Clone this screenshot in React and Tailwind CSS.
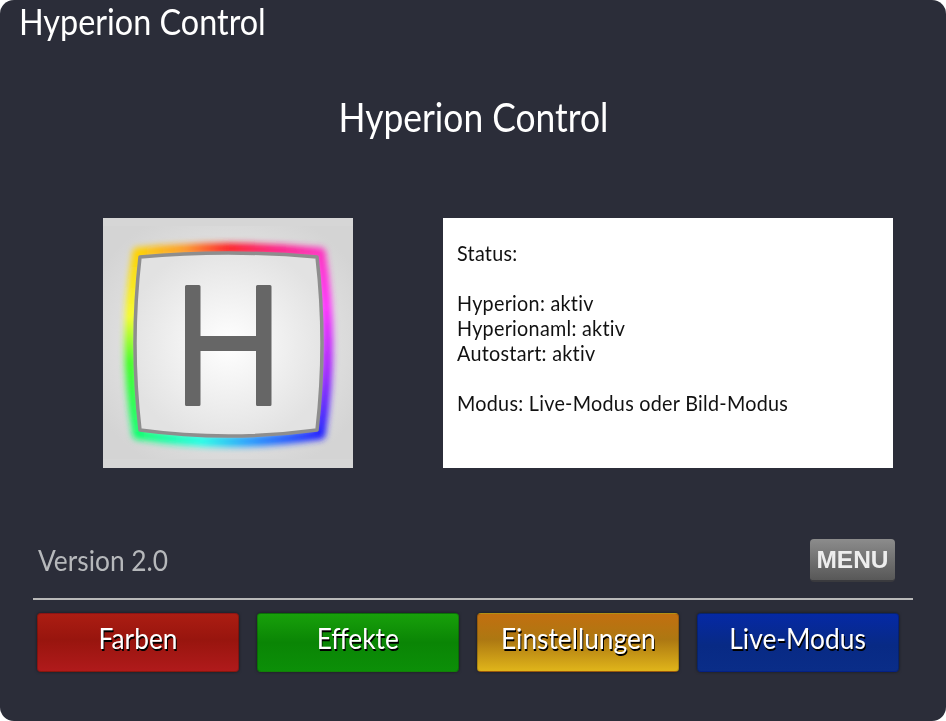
const FONT = "font-['Lato',sans-serif]";

function Logo() {
  const outer = "M37 39 Q125 31 214 39 Q224 125 214 212 Q125 224 37 212 Q27 125 37 39 Z";
  return (
    <svg viewBox="0 0 250 250" className="w-[250px] h-[250px] shrink-0 block">
      <defs>
        <radialGradient id="bg" cx="50%" cy="50%" r="60%">
          <stop offset="0" stopColor="#f4f4f4" />
          <stop offset="0.7" stopColor="#dedede" />
          <stop offset="1" stopColor="#d4d4d4" />
        </radialGradient>
        <radialGradient id="face" cx="50%" cy="50%" r="55%">
          <stop offset="0" stopColor="#ffffff" />
          <stop offset="1" stopColor="#e2e2e2" />
        </radialGradient>
        <linearGradient id="top" x1="0" x2="1" y1="0" y2="0">
          <stop offset="0" stopColor="#ffd000" />
          <stop offset="0.25" stopColor="#ff9a20" />
          <stop offset="0.5" stopColor="#ff1a20" />
          <stop offset="0.75" stopColor="#ff1a80" />
          <stop offset="1" stopColor="#ff30c0" />
        </linearGradient>
        <linearGradient id="right" x1="0" x2="0" y1="0" y2="1">
          <stop offset="0" stopColor="#ff30c0" />
          <stop offset="0.3" stopColor="#ff30ff" />
          <stop offset="0.65" stopColor="#a020ff" />
          <stop offset="1" stopColor="#2020ff" />
        </linearGradient>
        <linearGradient id="bottom" x1="0" x2="1" y1="0" y2="0">
          <stop offset="0" stopColor="#10ff70" />
          <stop offset="0.35" stopColor="#20ffe8" />
          <stop offset="0.6" stopColor="#20a0ff" />
          <stop offset="1" stopColor="#2020ff" />
        </linearGradient>
        <linearGradient id="left" x1="0" x2="0" y1="0" y2="1">
          <stop offset="0" stopColor="#ffd000" />
          <stop offset="0.35" stopColor="#f8ff20" />
          <stop offset="0.6" stopColor="#40ff20" />
          <stop offset="1" stopColor="#10ff70" />
        </linearGradient>
        <filter id="blur" x="-20%" y="-20%" width="140%" height="140%">
          <feGaussianBlur stdDeviation="3" />
        </filter>
      </defs>
      <rect width="250" height="250" fill="#d6d6d6" />
      <rect y="8" width="250" height="233" fill="url(#bg)" />
      <g filter="url(#blur)" fill="none" strokeWidth="11" strokeLinecap="round">
        <path d="M35 35 Q125 26 217 35" stroke="url(#top)" />
        <path d="M217 35 Q232 125 217 216" stroke="url(#right)" />
        <path d="M35 216 Q125 231 217 216" stroke="url(#bottom)" />
        <path d="M35 35 Q19 125 35 216" stroke="url(#left)" />
      </g>
      <path d={outer} fill="url(#face)" stroke="#8e8e8e" strokeWidth="3.5" strokeLinejoin="round" />
      <path
        d="M83.5 67 H96 Q97.5 67 97.5 68.5 V118 H153 V68.5 Q153 67 154.5 67 H167 Q168.5 67 168.5 68.5 V186.5 Q168.5 188 167 188 H154.5 Q153 188 153 186.5 V133 H97.5 V186.5 Q97.5 188 96 188 H83.5 Q82 188 82 186.5 V68.5 Q82 67 83.5 67 Z"
        fill="#666666"
      />
    </svg>
  );
}

function Btn({ label, bg }) {
  return (
    <button
      className={`w-[202px] h-[59px] rounded-[4px] text-white text-[28px] leading-none pb-[9px] border border-black/20 shadow-[0_0_3px_rgba(0,0,0,0.5)] [text-shadow:1px_2px_0_#000] ${bg}`}
    >
      <span className="inline-block scale-x-[0.94]">{label}</span>
    </button>
  );
}

export default function App() {
  return (
    <div className={`w-[946px] h-[721px] bg-white ${FONT}`}>
      <div className="w-full h-full rounded-[14px] bg-[#2b2d39] flex flex-col">
        <div className="h-[42px] pl-[19px] text-white text-[37px] leading-[42px]">
          <span className="inline-block origin-left scale-x-[0.875]">Hyperion Control</span>
        </div>
        <h1 className="mt-[54px] h-[44px] text-center text-white text-[40px] leading-[42px]">
          <span className="inline-block scale-x-[0.885]">Hyperion Control</span>
        </h1>
        <div className="mt-[78px] pl-[103px] flex gap-[90px]">
          <Logo />
          <div className="w-[450px] h-[250px] bg-white pl-[14px] pt-[22px] text-[#111] text-[21px] leading-[25px] tracking-[0.3px]">
            <div className="origin-left scale-x-[0.94]">
              <p>Status:</p>
              <p className="mt-[25px]">Hyperion: aktiv</p>
              <p>Hyperionaml: aktiv</p>
              <p>Autostart: aktiv</p>
              <p className="mt-[25px]">Modus: Live-Modus oder Bild-Modus</p>
            </div>
          </div>
        </div>
        <div className="mt-[71px] pl-[38px] pr-[51px] h-[44px] flex items-start justify-between">
          <span className="inline-block origin-left scale-x-[0.94] text-[#b6b8bb] text-[28px] leading-[42px]">Version 2.0</span>
          <span className="w-[85px] h-[43px] rounded-[4px] bg-gradient-to-b from-[#8c8c8c] to-[#585858] border-b-2 border-[#3a3a3e] flex items-center justify-center pt-[2px]">
            <span className="font-['Liberation_Sans',sans-serif] font-bold text-[24.5px] leading-none text-[#eeeeee] blur-[0.6px]">MENU</span>
          </span>
        </div>
        <div className="mt-[15px] mx-[33px] h-[2px] bg-[#b9b9b9]" />
        <div className="mt-[13px] pl-[37px] flex gap-[18px]">
          <Btn label="Farben" bg="bg-[linear-gradient(#ab1d12,#98150e_45%,#b01a1b)]" />
          <Btn label="Effekte" bg="bg-[linear-gradient(#18a00a,#0a8505_50%,#0c8f08)]" />
          <Btn label="Einstellungen" bg="bg-[linear-gradient(#c26f10,#ad7812_45%,#e0b51a)]" />
          <Btn label="Live-Modus" bg="bg-[linear-gradient(#0529a5,#082a85_55%,#0a2d88)]" />
        </div>
      </div>
    </div>
  );
}
